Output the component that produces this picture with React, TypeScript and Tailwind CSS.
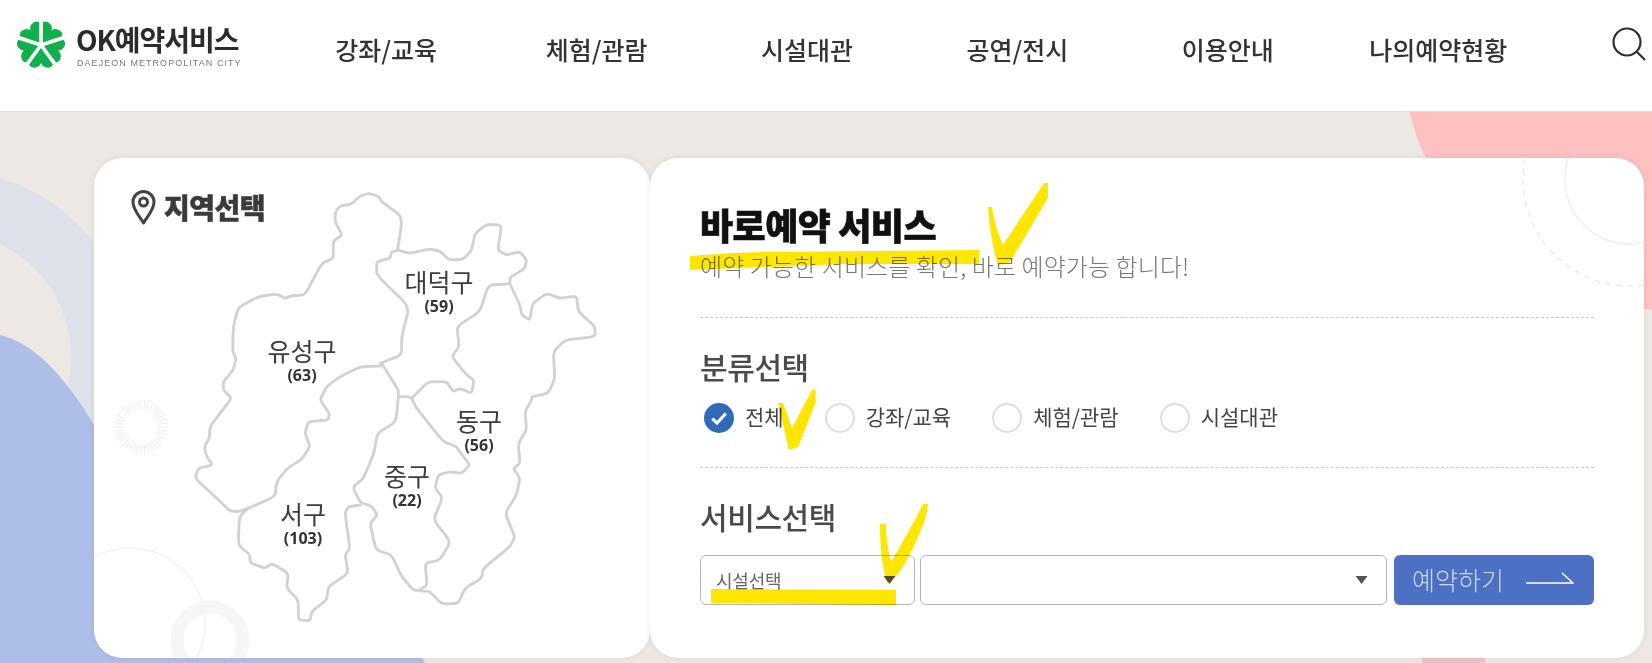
import React from 'react';

const NAV = ['강좌/교육', '체험/관람', '시설대관', '공연/전시', '이용안내', '나의예약현황'];

// traced from the map, in 3x units around (170,400)
const YUSEONG = '683,-450 695,-530 690,-555 635,-595 625,-612 595,-620 570,-612 545,-588 510,-582 497,-565 495,-535 517,-495 490,-477 490,-425 455,-410 405,-315 365,-313 345,-305 320,-318 265,-310 205,-278 190,-220 188,-145 198,-125 190,-90 160,-55 160,-30 185,-5 150,40 120,80 118,115 103,140 110,170 128,195 85,205 75,235 135,290 180,333 205,335 235,325 315,290 320,245 352,205 395,178 420,140 405,100 415,65 475,60 478,40 450,0 470,-40 510,-70 570,-100 640,-102 630,-110 695,-135 695,-190 718,-280 620,-375 620,-415 660,-425 665,-445 683,-450';
const DAEDEOK = '683,-450 720,-440 775,-453 810,-447 838,-420 880,-422 905,-450 915,-500 950,-527 995,-525 983,-450 1010,-435 1050,-445 1070,-420 1065,-395 1020,-368 1020,-348 955,-345 930,-265 860,-220 868,-160 845,-130 890,-75 912,-60 905,-20 870,-35 850,-25 830,-55 775,-55 725,-5 715,-10 685,-10 685,-30 640,-102';
const DONG = '1020,-348 1050,-285 1055,-255 1080,-240 1088,-290 1130,-320 1170,-305 1220,-312 1225,-265 1275,-220 1275,-190 1185,-180 1150,-145 1155,-65 1135,-20 1085,-10 1085,0 1065,35 1070,90 1045,130 1050,190 1030,205 1050,235 1040,285 1005,340 1035,410 1020,440 940,505 935,535 885,565 865,610 815,612 780,575 745,572 772,555 765,490 810,480 842,425 790,360 818,293 795,265 805,225 840,215 875,220 900,195 865,150 860,140 820,125 740,25 725,-5';
const JUNG = '685,-10 678,65 622,100 612,160 580,235 548,262 572,308 605,318 622,345 600,370 618,450 665,465 695,530 730,570 745,572';
const SEO = '572,315 535,320 525,340 540,445 525,465 535,520 475,560 470,600 425,635 420,662 385,660 385,600 350,565 355,520 305,490 285,505 240,488 240,465 205,435 208,350 235,325';

// rounds the traced corners off
const smooth = (points: string) => {
  const p = points.split(' ').map((s) => s.split(',').map(Number));
  let d = `M${p[0][0]},${p[0][1]}`;
  for (let i = 1; i < p.length - 1; i++) {
    const mx = (p[i][0] + p[i + 1][0]) / 2;
    const my = (p[i][1] + p[i + 1][1]) / 2;
    d += ` L${p[i][0] + (p[i - 1][0] - p[i][0]) * 0.25},${p[i][1] + (p[i - 1][1] - p[i][1]) * 0.25}`;
    d += ` Q${p[i][0]},${p[i][1]} ${p[i][0] + (mx - p[i][0]) * 0.5},${p[i][1] + (my - p[i][1]) * 0.5}`;
  }
  const last = p[p.length - 1];
  return `${d} L${last[0]},${last[1]}`;
};

const Star = () => (
  <svg viewBox="-56 -56 112 112" className="w-[48px] h-[48px] shrink-0">
    {[36, 108, 180, 252, 324].map((a) => (
      <path
        key={a}
        transform={`rotate(${a})`}
        fill="#12b04d"
        d="M0,-7 L-28,-46 Q-22,-56 -10,-52 Q-3,-50 0,-42 Q3,-50 10,-52 Q22,-56 28,-46 Z"
      />
    ))}
  </svg>
);

const Region = ({ name, count, className }: { name: string; count: string; className: string }) => (
  <div className={`absolute -translate-x-1/2 flex flex-col items-center text-[#3d3d3d] ${className}`}>
    <span className="text-[25px] leading-[30px]">{name}</span>
    <span className="text-[16px] leading-[20px] font-bold font-['Noto_Sans',sans-serif] text-[#333]">{count}</span>
  </div>
);

const Radio = ({ label, checked }: { label: string; checked?: boolean }) => (
  <label className="flex items-start gap-[11px] h-[30px]">
    {checked ? (
      <span className="w-[30px] h-[30px] rounded-full bg-[#2f6bb8] flex items-center justify-center">
        <svg viewBox="0 0 16 16" className="w-[18px] h-[18px]" fill="none" stroke="#fff" strokeWidth="2.8">
          <path d="M2 8.5 L6.3 12.5 L14 4" />
        </svg>
      </span>
    ) : (
      <span className="w-[30px] h-[30px] rounded-full bg-white border-2 border-[#dedede]" />
    )}
    <span className="text-[21px] leading-[26px] text-[#444]">{label}</span>
  </label>
);

const Caret = () => (
  <svg viewBox="0 0 12 8" className="w-[13px] h-[8px]">
    <path d="M0 0 H12 L6 8 Z" fill="#555" />
  </svg>
);

const App = () => {
  return (
    <div className="relative w-[1652px] h-[663px] overflow-hidden bg-[#ede8e4] font-['Noto_Sans_CJK_KR','Noto_Sans',sans-serif]">
      {/* background shapes */}
      <svg className="absolute left-0 top-0 w-[1652px] h-[663px]" viewBox="0 0 1652 663">
        <circle cx="1662" cy="50" r="260" fill="#ffc0c0" />
        <circle cx="-54" cy="357" r="156" fill="none" stroke="#dfe1ea" strokeWidth="62" />
        <path d="M0,335 Q47,346 94,425 L110,470 L420,655 L425,663 L0,663 Z" fill="#adbfe8" />
        <rect x="1422" y="650" width="63" height="13" fill="#f0c4c2" />
      </svg>

      <header className="relative h-[112px] bg-white border-b border-[#e4e2e0] flex items-start">
        <div className="w-[281px] pl-[17px] pt-[21px] flex items-start gap-[11px]">
          <Star />
          <div className="flex flex-col">
            <span className="text-[28px] leading-[36px] font-bold text-[#2b2b2b] tracking-[-1px] whitespace-nowrap">OK예약서비스</span>
            <span className="text-[9px] leading-[10px] mt-[1px] ml-[1px] text-[#777] tracking-[1.05px] whitespace-nowrap font-['Liberation_Sans',sans-serif]">DAEJEON METROPOLITAN CITY</span>
          </div>
        </div>
        <nav className="flex pt-[29px]">
          {NAV.map((item) => (
            <a key={item} className="w-[210.4px] text-center text-[25px] leading-[40px] font-medium text-[#333] whitespace-nowrap">
              {item}
            </a>
          ))}
        </nav>
        <svg viewBox="0 0 34 34" className="absolute left-[1612px] top-[27px] w-[34px] h-[34px]" fill="none" stroke="#2e2e2e" strokeWidth="2.2">
          <circle cx="15" cy="15" r="13.5" />
          <path d="M25 25 L33 33" />
        </svg>
      </header>

      <main className="relative flex pl-[94px] pr-[8px] pt-[46px]">
        {/* region map */}
        <section className="relative w-[556px] h-[500px] rounded-[28px] bg-white overflow-hidden shadow-[0_0_6px_rgba(0,0,0,0.08)]">
          <svg className="absolute inset-0 w-[556px] h-[500px]" viewBox="94 158 556 500">
            <circle cx="130" cy="623" r="75" fill="none" stroke="#ececec" />
            <circle cx="210" cy="640" r="33" fill="none" stroke="#f6f6f6" strokeWidth="13" />
            {Array.from({ length: 40 }).map((_, i) => (
              <line key={i} x1="141" y1="400" x2="141" y2="410" stroke="#efefef" strokeWidth="1.2" transform={`rotate(${i * 9} 141 427)`} />
            ))}
            <g transform="translate(170 400) scale(0.3333)" fill="none" stroke="#d2d2d2" strokeWidth="8.5" strokeLinejoin="round" strokeLinecap="round">
              <path d={smooth(YUSEONG)} />
              <path d={smooth(DAEDEOK)} />
              <path d={smooth(DONG)} />
              <path d={smooth(JUNG)} />
              <path d={smooth(SEO)} />
            </g>
          </svg>

          <div className="relative flex items-center gap-[8px] pl-[37px] pt-[31px]">
            <svg viewBox="0 0 24 35" className="w-[25px] h-[35px]" fill="none" stroke="#444" strokeWidth="3">
              <path d="M12 33 C8 26 1.5 20 1.5 12 A10.5 10.5 0 0 1 22.5 12 C22.5 20 16 26 12 33 Z" strokeLinejoin="round" />
              <circle cx="12" cy="12" r="4" />
            </svg>
            <h2 className="text-[28px] leading-[36px] font-black text-[#3a3a3a] tracking-[-0.5px] [-webkit-text-stroke:0.5px_#3a3a3a]">지역선택</h2>
          </div>

          <Region name="대덕구" count="(59)" className="left-[345px] top-[108px]" />
          <Region name="유성구" count="(63)" className="left-[208px] top-[177px]" />
          <Region name="동구" count="(56)" className="left-[385px] top-[247px]" />
          <Region name="중구" count="(22)" className="left-[313px] top-[302px]" />
          <Region name="서구" count="(103)" className="left-[209px] top-[340px]" />
        </section>

        {/* booking panel */}
        <section className="relative w-[994px] h-[500px] rounded-[28px] bg-white overflow-hidden px-[50px] pt-[42px] shadow-[0_0_6px_rgba(0,0,0,0.08)]">
          <svg className="absolute inset-0 w-[994px] h-[500px]" viewBox="650 158 994 500">
            <circle cx="1630" cy="179" r="65" fill="none" stroke="#efefef" strokeWidth="1.5" />
            <circle cx="1630" cy="179" r="107" fill="none" stroke="#e8e8e8" strokeWidth="1.2" strokeDasharray="6 5" />
          </svg>

          <div className="relative border-b border-dashed border-[#c8c8c8] pb-[34px]">
            <h1 className="text-[36px] leading-[49px] font-black text-[#111] tracking-[-0.5px] [-webkit-text-stroke:0.6px_#111]">바로예약 서비스</h1>
            <p className="text-[24px] leading-[34px] font-light text-[#777] tracking-[0.1px]">예약 가능한 서비스를 확인, 바로 예약가능 합니다!</p>
          </div>

          <div className="relative border-b border-dashed border-[#c8c8c8] pt-[28px] pb-[34px]">
            <h3 className="text-[30px] leading-[40px] font-medium text-[#4a4a4a] tracking-[-0.4px]">분류선택</h3>
            <div className="mt-[17px] ml-[4px] flex gap-[41px]">
              <Radio label="전체" checked />
              <Radio label="강좌/교육" />
              <Radio label="체험/관람" />
              <Radio label="시설대관" />
            </div>
          </div>

          <div className="relative pt-[28px]">
            <h3 className="text-[30px] leading-[40px] font-medium text-[#4a4a4a] tracking-[-0.4px]">서비스선택</h3>
            <div className="mt-[19px] flex">
              <div className="w-[215px] h-[50px] rounded-[6px] border border-[#b5b5b5] flex items-center justify-between pl-[15px] pr-[18px]">
                <span className="text-[18px] text-[#666] tracking-[-0.2px]">시설선택</span>
                <Caret />
              </div>
              <div className="ml-[5px] w-[467px] h-[50px] rounded-[6px] border border-[#b5b5b5] flex items-center justify-end pr-[18px]">
                <Caret />
              </div>
              <button className="ml-[7px] w-[200px] h-[50px] rounded-[6px] bg-[#4c70c4] flex items-center pl-[18px] gap-[22px]">
                <span className="text-[25px] font-light text-[#cdd9f2] whitespace-nowrap">예약하기</span>
                <svg viewBox="0 0 48 12" className="w-[48px] h-[12px] mb-[4px]" fill="none" stroke="#fff" strokeWidth="1.5">
                  <path d="M0 11 H47 L36 1" />
                </svg>
              </button>
            </div>
          </div>
        </section>
      </main>

      {/* yellow marker annotations */}
      <svg className="absolute left-0 top-0 w-[1652px] h-[663px] pointer-events-none mix-blend-multiply" viewBox="0 0 1652 663" fill="#ffe600">
        <path d="M690,256 Q740,252 773,252 L979,250 L979,264 L842,264 L690,270 Z" />
        <path d="M988,207 L992,207 Q995,228 1003,245 L1044,183 L1048,183 L1048,198 L1010,262 L998,265 Q990,240 988,207 Z" />
        <path d="M778,403 L783,403 L792,428 L812,390 L815.5,390 L815.5,403 L798,447 L789,450 Z" />
        <path d="M880,524 L886,524 Q886,545 891,562 Q910,530 923,504 L928,504 L926,517 Q914,550 899,573 L887,583 Q880,560 880,524 Z" />
        <path d="M711,589 L896,590 L896,605 L711,603 Z" />
      </svg>
    </div>
  );
};

export default App;
